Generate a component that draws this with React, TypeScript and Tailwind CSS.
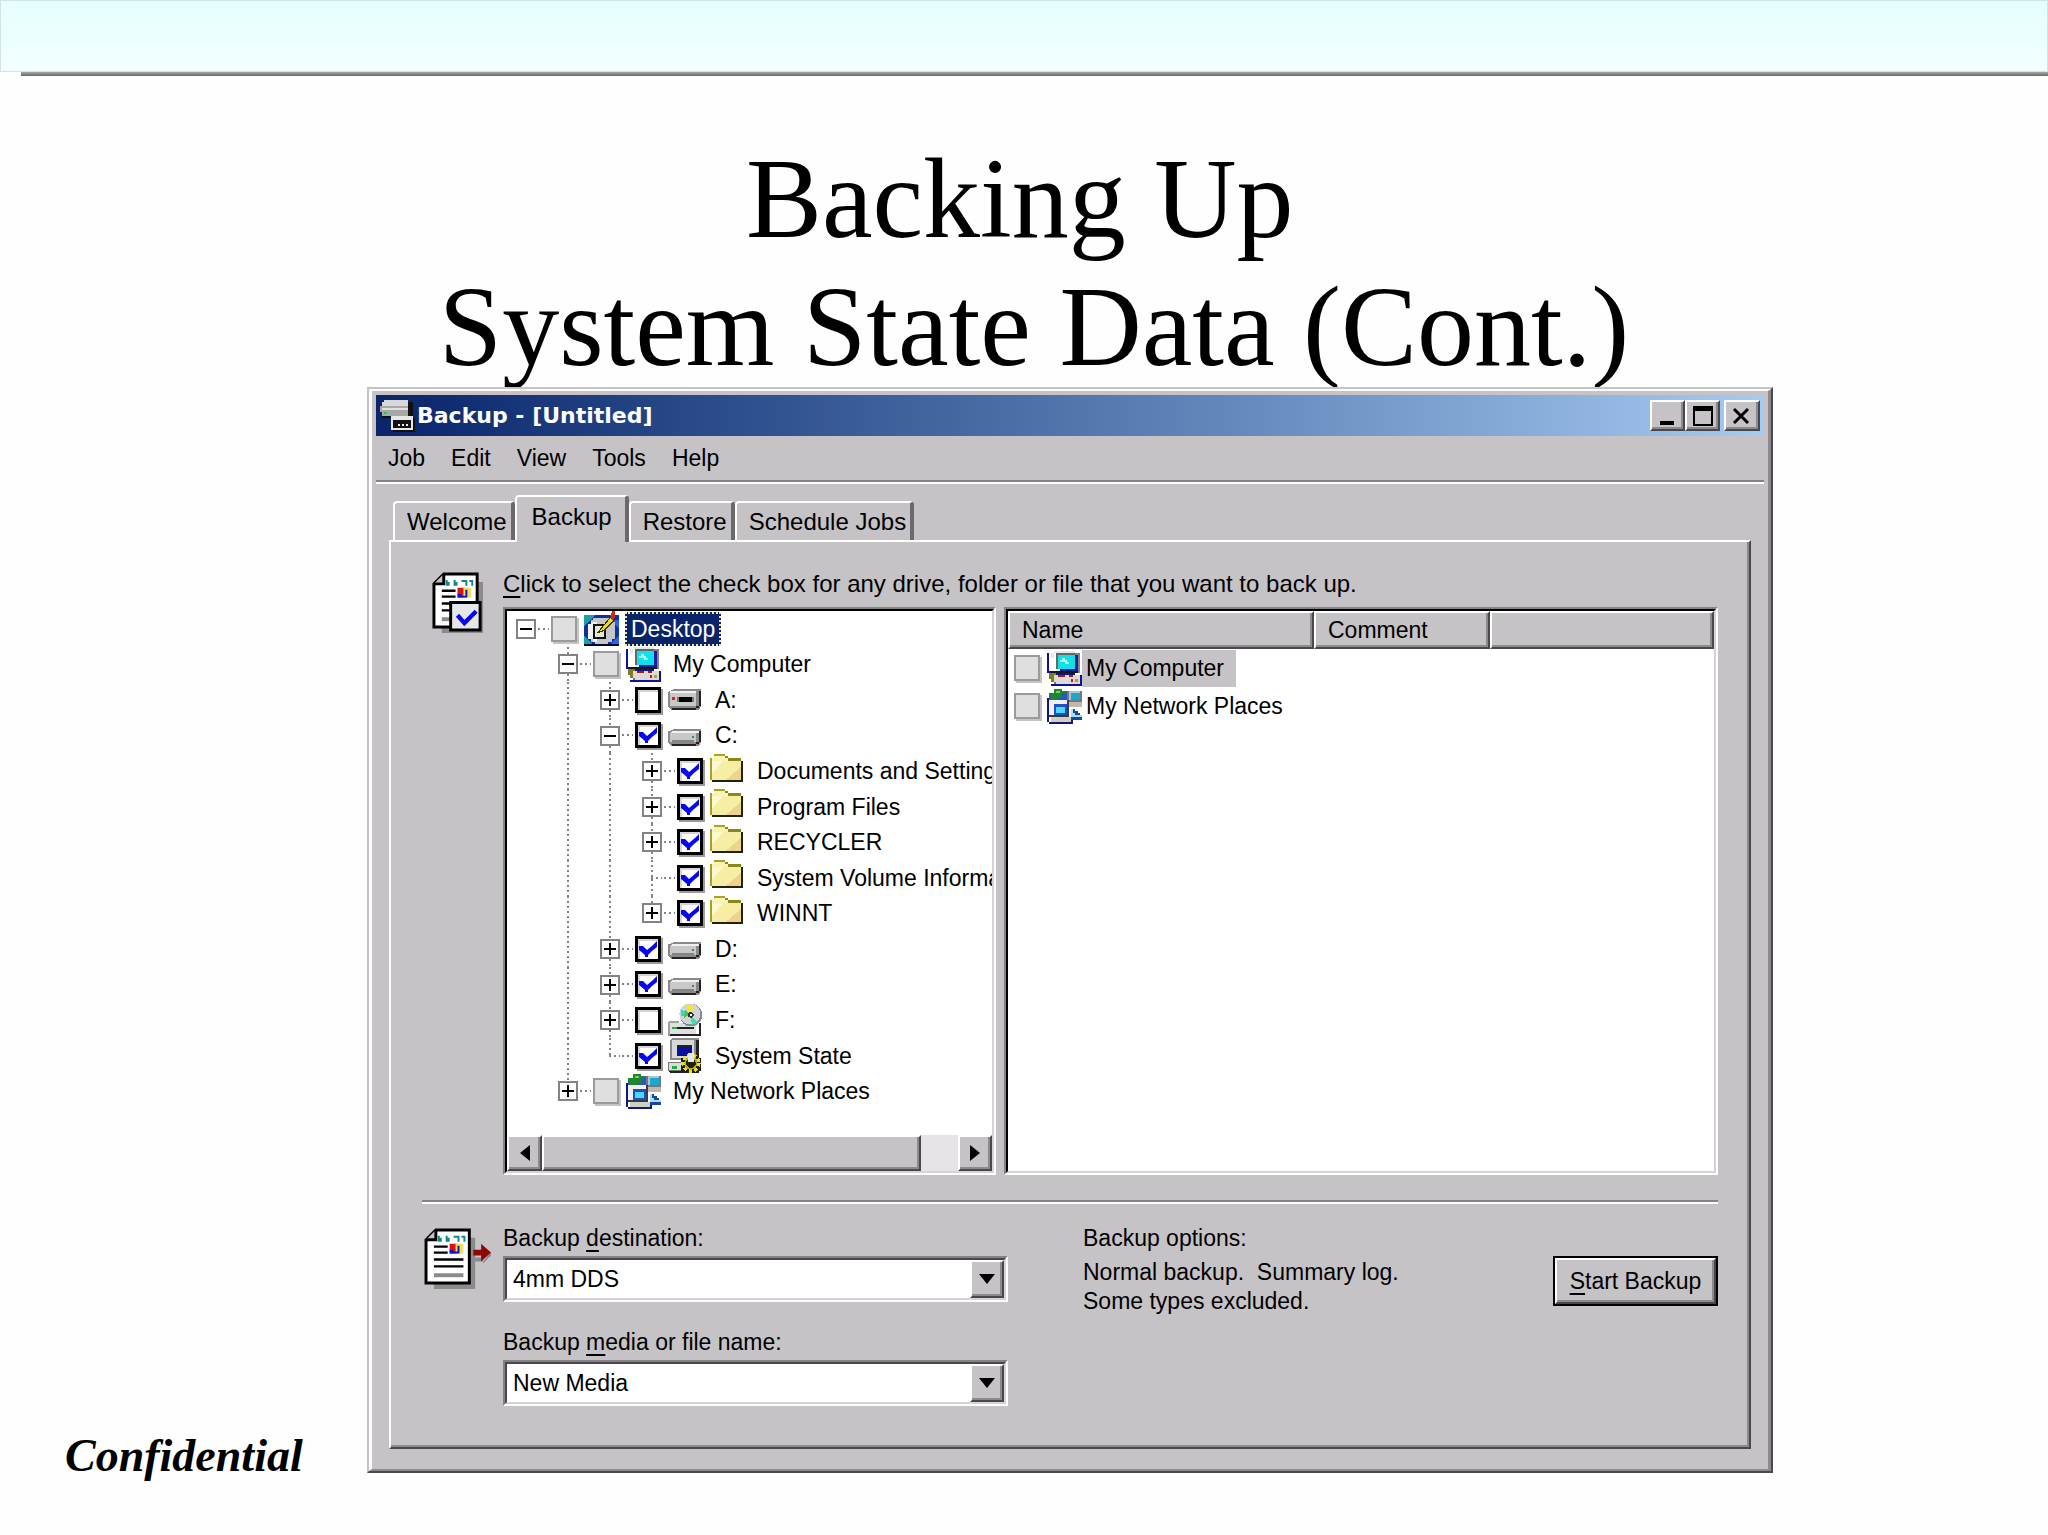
import { useState } from "react"
import type { ReactNode } from "react"

type IconName = 'desktop' | 'computer' | 'floppy' | 'drive' | 'folder' | 'cdrom' | 'state' | 'network'

interface TreeNode {
    label: string
    icon: IconName
    level: number
    expander: '+' | '-' | null
    checked: boolean
    disabled?: boolean
    // levels whose vertical line passes through this row
    guides: number[]
    last?: boolean
}

const nodes: TreeNode[] = [
    { label: 'Desktop', icon: 'desktop', level: 0, expander: '-', checked: false, disabled: true, guides: [] },
    { label: 'My Computer', icon: 'computer', level: 1, expander: '-', checked: false, disabled: true, guides: [] },
    { label: 'A:', icon: 'floppy', level: 2, expander: '+', checked: false, guides: [1] },
    { label: 'C:', icon: 'drive', level: 2, expander: '-', checked: true, guides: [1] },
    { label: 'Documents and Settings', icon: 'folder', level: 3, expander: '+', checked: true, guides: [1, 2] },
    { label: 'Program Files', icon: 'folder', level: 3, expander: '+', checked: true, guides: [1, 2] },
    { label: 'RECYCLER', icon: 'folder', level: 3, expander: '+', checked: true, guides: [1, 2] },
    { label: 'System Volume Information', icon: 'folder', level: 3, expander: null, checked: true, guides: [1, 2] },
    { label: 'WINNT', icon: 'folder', level: 3, expander: '+', checked: true, guides: [1, 2], last: true },
    { label: 'D:', icon: 'drive', level: 2, expander: '+', checked: true, guides: [1] },
    { label: 'E:', icon: 'drive', level: 2, expander: '+', checked: true, guides: [1] },
    { label: 'F:', icon: 'cdrom', level: 2, expander: '+', checked: false, guides: [1] },
    { label: 'System State', icon: 'state', level: 2, expander: null, checked: true, guides: [1], last: true },
    { label: 'My Network Places', icon: 'network', level: 1, expander: '+', checked: false, disabled: true, guides: [], last: true },
]

const vDots = 'w-[2px] bg-[repeating-linear-gradient(#848284_0_2px,transparent_2px_5px)]'
const hDots = 'h-[2px] bg-[repeating-linear-gradient(90deg,#848284_0_2px,transparent_2px_5px)]'
const raised = 'border-2 border-t-white border-l-white border-r-[#4a484a] border-b-[#4a484a] bg-[#c6c3c6] shadow-[inset_-2px_-2px_0_#8c8a8c]'

// ─── Icons ───────────────────────────────────────
const iconShapes: Record<IconName, ReactNode> = {
    desktop: (
        <>
            <rect x="0" y="2" width="16" height="14" fill="#12309c" />
            <path d="M0 2h5L0 7zM0 16v-5l5 5z" fill="#1aa0a8" />
            <path d="M16 16v-5l-5 5zM16 4v4l-4-4z" fill="#2a62e8" />
            <path d="M4 3h8v1h1v1h1v8h-1v1h-2v1H5v-1H3v-1H2V6h1V4h1z" fill="#c4c6c8" />
            <path d="M3 5h3v9H4v-1H2V6h1z" fill="#f2f2f2" />
            <path d="M4 6h6v7H4z" fill="#111" />
            <path d="M5 7h4v5H5z" fill="#e8e8d8" />
            <path d="M7 9l5-6 2 1-5 5-3 1z" fill="#e8d820" stroke="#3a3000" strokeWidth="0.5" />
            <path d="M12 2l1-2h1v3l-1 1z" fill="#d02818" />
            <rect x="0" y="15" width="16" height="1" fill="#000830" />
        </>
    ),
    computer: (
        <>
            <path d="M0 1h1v8h1v1h11v1H1v-1H0z" fill="#10109c" />
            <path d="M3 0h10v1h1v9H3v-1H2V1h1z" fill="#e8e8e8" />
            <path d="M13 1h2v9h-2z" fill="#848284" />
            <path d="M3 1h1v8H2V3h1z" fill="#fff" />
            <path d="M4 1h9v7H4z" fill="#60686c" />
            <path d="M5 2h8v6H5z" fill="#10e0e8" />
            <path d="M6 4h1V3h1v1h1v1h1v1H8V5H6z" fill="#a8fbff" />
            <path d="M13 2v6H6v1h8V2z" fill="#1020a0" />
            <path d="M2 9h12v1H2z" fill="#181818" />
            <path d="M1 10h3v5H3v-1H2v-1H1z" fill="#7c7c20" />
            <path d="M3 11h12v4H4v-1H3z" fill="#dcdcd4" />
            <path d="M5 11h3v1H5zM10 11h2v1h-2z" fill="#a01818" />
            <path d="M11 13h1v1h-1z" fill="#c02020" />
            <path d="M13 13h1v1h-1z" fill="#c0a020" />
            <path d="M2 15h13v-4h1v5H2z" fill="#10109c" />
        </>
    ),
    floppy: (
        <>
            <path d="M1 4l2-1h12v8l-1 2H2l-2-2V5z" fill="#8a888a" />
            <path d="M1 4h12v7H1z" fill="#c8c8c8" />
            <path d="M1 4h12v1H1z" fill="#f0f0f0" />
            <path d="M14 4h1v7h-1v1h-1v1H2v-1h11v-1h1z" fill="#222" />
            <rect x="4" y="7" width="8" height="2" fill="#777" />
            <rect x="5" y="7" width="6" height="2" fill="#000" />
            <rect x="2" y="7" width="1" height="1" fill="#e02020" />
        </>
    ),
    drive: (
        <>
            <path d="M1 6l2-1h12v6l-1 2H2l-2-2V6z" fill="#8a888a" />
            <path d="M1 7h12v4H1z" fill="#c8c8c8" />
            <path d="M2 6h12v1H1z" fill="#f0f0f0" />
            <path d="M14 6h1v5h-1v1h-1v1H2v-1h11v-1h1z" fill="#222" />
            <rect x="2" y="10" width="10" height="1" fill="#848284" />
            <rect x="11" y="8" width="1" height="1" fill="#20a030" />
        </>
    ),
    folder: (
        <>
            <path d="M1 12h13V3h1v10H1z" fill="#222210" />
            <path d="M0 2h2V0h5v1h1v1h6v10H0z" fill="#a8a420" />
            <path d="M2 1h5v1h1v1H1V2h1z" fill="#f8f4b8" />
            <path d="M1 3h13v9H1z" fill="#f6eea4" />
            <path d="M1 3h5L1 9z" fill="#fcf8d0" />
            <path d="M14 6v6H7z" fill="#ecd48c" />
            <path d="M7 1h1v1H7zM8 2h6v1H8z" fill="#8c8818" />
        </>
    ),
    cdrom: (
        <>
            <path d="M1 8h4v7H0V9z" fill="#a0a0a0" />
            <path d="M1 9h12v5H1z" fill="#e0e0e0" />
            <path d="M1 14h13V9h1v6H1z" fill="#222" />
            <circle cx="10.5" cy="5.5" r="5.2" fill="#8a8a8a" />
            <circle cx="10" cy="5" r="4.8" fill="#d0d4d4" />
            <path d="M10 5L8 1h4z" fill="#f0e830" />
            <path d="M10 5L6 3v3z" fill="#30d8d8" />
            <path d="M10 5l4 4-3 1z" fill="#40e0b0" />
            <path d="M8 3l2 2-3 2z" fill="#40c840" />
            <circle cx="10.5" cy="5.5" r="1.3" fill="#333" />
            <circle cx="10.5" cy="5.5" r="0.6" fill="#fff" />
            <rect x="4" y="11" width="8" height="1" fill="#222" />
            <rect x="2" y="11" width="2" height="1" fill="#20b040" />
        </>
    ),
    state: (
        <>
            <path d="M2 0h12v9l-1 1H1V1z" fill="#8a8a8a" />
            <path d="M2 1h10v8H2z" fill="#d8d8d8" />
            <path d="M13 1h1v9h-1z" fill="#222" />
            <rect x="4" y="3" width="7" height="5" fill="#0810a0" />
            <rect x="4" y="3" width="7" height="1" fill="#222" />
            <path d="M0 11h6v4H0z" fill="#dcdcdc" stroke="#777" strokeWidth="0.5" />
            <path d="M0 15h14v1H1z" fill="#222" />
            <rect x="2" y="13" width="2" height="1" fill="#20b040" />
            <path d="M6 9h9v6H6z" fill="#222010" />
            <circle cx="10.5" cy="11.5" r="3.4" fill="none" stroke="#e8e020" strokeWidth="2" strokeDasharray="1.4 1" />
            <circle cx="10.5" cy="11.5" r="2.6" fill="none" stroke="#b8ac10" strokeWidth="0.8" />
            <path d="M9 7h3v4H9z" fill="#e8e8e8" />
        </>
    ),
    network: (
        <>
            <path d="M1 2h8v4H1z" fill="#2858c8" />
            <path d="M3 0h4v1h2v1H7v2H5v1H2V3H1V2h2z" fill="#208828" />
            <path d="M4 1h2v1H4z" fill="#70d060" />
            <path d="M9 1h7v6H9z" fill="#707880" />
            <path d="M10 1h5v4h-5z" fill="#b8c0c8" />
            <path d="M11 2h4v3h-4z" fill="#18a8d0" />
            <path d="M9 6h7v2H9z" fill="#c0b8a8" />
            <path d="M0 4h1v11h1v1H1v-1H0z" fill="#10187c" />
            <path d="M1 5h9v8H1z" fill="#f0f0f0" />
            <path d="M9 5h1v9H9z" fill="#383858" />
            <path d="M3 7h6v5H3z" fill="#2050c0" />
            <path d="M4 8h4v3H4z" fill="#48d8f8" />
            <path d="M1 12h9v1H1z" fill="#383848" />
            <path d="M2 13h9v2H2z" fill="#d0d0c0" />
            <path d="M2 15h9v-2h1v3H2z" fill="#10187c" />
            <path d="M11 9h2v1h1v2h2v1h-5z" fill="#a8e0f4" />
            <path d="M12 9h1v1h1v1h1v1h-2v-1h-1zM11 13h5v1h-5z" fill="#18489c" />
        </>
    ),
}

const Icon = ({ name }: { name: IconName }) => (
    <svg viewBox="0 0 16 16" className="w-[35px] h-[35px] shrink-0" shapeRendering="crispEdges" aria-hidden="true">
        {iconShapes[name]}
    </svg>
)

const Sheet = () => (
    <>
        <path d="M5 5h21v28H5z" fill="#8c8a8c" />
        <path d="M6 1h17v27H1V6z" fill="#fff" stroke="#000" strokeWidth="1.5" />
        <path d="M6 1v5H1" fill="#c6c3c6" stroke="#000" strokeWidth="1.5" />
        <path d="M7 4h1v1h1v2H7zM11 4h1v1h1v2h-2zM15 4h3v3h-1V5h-2zM19 4h2v3h-1V5h-1z" fill="#108888" />
        <path d="M5 9.500h7M5 12.500h7M5 16h15M5 19.500h15" stroke="#000" strokeWidth="1.200" />
        <path d="M5 24h15" stroke="#8c8a8c" strokeWidth="2" />
        <path d="M13 8h4v5h-4z" fill="#e01010" />
        <path d="M16 8h4v5h-4z" fill="#f0e060" />
        <path d="M13 11h2v1h2v-3h1v4h-5z" fill="#1010d0" />
    </>
)

const SelectIcon = () => (
    <svg viewBox="0 0 27 31" className="w-[53px] h-[61px]" aria-hidden="true">
        <Sheet />
        <path d="M9.500 15.500h15v14h-15z" fill="#e7e7e7" stroke="#000" strokeWidth="1.500" />
        <path d="M13 22l3.500 4 6-6" fill="none" stroke="#0808f0" strokeWidth="2.200" />
    </svg>
)

const DestinationIcon = () => (
    <svg viewBox="0 0 35 31" className="w-[69px] h-[61px]" aria-hidden="true">
        <Sheet />
        <path d="M26 15h4v3l4-4v-2l-4 5h-4z" fill="#8c8a8c" />
        <path d="M25 11h4V8l5 4.500-5 4.500v-3h-4z" fill="#8c0808" />
    </svg>
)

const AppIcon = () => (
    <svg viewBox="0 0 16 16" className="w-[35px] h-[32px]" preserveAspectRatio="none" shapeRendering="crispEdges" aria-hidden="true">
        <path d="M2 0h11v1h2v7h-1v1H1V2h1z" fill="#111" />
        <path d="M2 0h11v3H1V1h1z" fill="#d8d8d8" />
        <path d="M0 3h13v5H1V6H0z" fill="#a8a8a8" />
        <path d="M1 4h12v1H1z" fill="#e0e0e0" />
        <rect x="2" y="6" width="1" height="1" fill="#20d040" />
        <path d="M6 9h10v7H6z" fill="#111" />
        <path d="M5 8h10v7H5z" fill="#e8e8e8" />
        <path d="M6 10h8v4H6z" fill="#111" />
        <path d="M8 12h1v1H8zM10 12h1v1h-1zM12 12h1v1h-1z" fill="#eee" />
    </svg>
)

// ─── Controls ────────────────────────────────────
interface CheckProps {
    label: string
    checked: boolean
    disabled?: boolean
    onChange?: () => void
}

const Check = ({ label, checked, disabled, onChange }: CheckProps) => (
    <span className="grid shrink-0 w-[27px]">
        <input
            type="checkbox"
            aria-label={label}
            checked={checked}
            disabled={disabled}
            onChange={onChange}
            className="[grid-area:1/1] appearance-none w-[26px] h-[26px] border-[3px] border-black bg-white shadow-[inset_1px_1px_0_1px_#d6d3d6,2px_2px_0_#9c9a9c]
                disabled:border-2 disabled:border-[#9c9a9c] disabled:bg-[#e0dfe0] disabled:shadow-[2px_2px_0_#c6c3c6]"
        />
        {checked && (
            <svg viewBox="0 0 26 26" className="[grid-area:1/1] w-[26px] h-[26px] pointer-events-none" aria-hidden="true">
                <path d="M4 10h4l4 4 6-5 4-4v6l-5 4-4 4v2h-3v-2l-6-5z" fill="#0808f0" />
            </svg>
        )}
    </span>
)

interface TreeRowProps {
    node: TreeNode
    checked: boolean
    onToggle: () => void
}

const TreeRow = ({ node, checked, onToggle }: TreeRowProps) => (
    <li className="flex items-center min-h-0">
        {Array.from({ length: node.level }, (_, k) => (
            <span key={k} className="w-[42px] shrink-0 self-stretch flex pl-[9px]">
                {node.guides.includes(k) && <span className={vDots} />}
            </span>
        ))}
        <span className="w-5 shrink-0 self-stretch flex flex-col items-center">
            <span className={`flex-1 ${node.level > 0 ? vDots : ''}`} />
            {node.expander ? (
                <button
                    type="button"
                    aria-label={`${node.expander === '+' ? 'Expand' : 'Collapse'} ${node.label}`}
                    className="w-5 h-5 border-2 border-[#848284] bg-white flex items-center justify-center"
                >
                    <svg viewBox="0 0 12 12" className="w-3 h-3" aria-hidden="true">
                        <path d={node.expander === '+' ? 'M0 5h12v2H0zM5 0h2v12H5z' : 'M0 5h12v2H0z'} fill="#000" />
                    </svg>
                </button>
            ) : (
                <span className={`w-[11px] self-end ${hDots}`} />
            )}
            <span className={`flex-1 ${node.level > 0 && !node.last ? vDots : ''}`} />
        </span>
        <span className="w-[15px] shrink-0 px-[2px]">
            <span className={`block ${hDots}`} />
        </span>
        <Check label={node.label} checked={checked} disabled={node.disabled} onChange={onToggle} />
        <span className="flex items-center gap-[6px] pl-[6px]">
            <Icon name={node.icon} />
            {node.level === 0 ? (
                <span className="px-1 h-[34px] leading-[30px] whitespace-nowrap bg-[#0a246a] text-white border-2 border-dotted border-[#f0e8a0]">
                    {node.label}
                </span>
            ) : (
                <span className="px-[6px] leading-8 whitespace-nowrap">{node.label}</span>
            )}
        </span>
    </li>
)

interface DropDownProps {
    id: string
    label: ReactNode
    value: string
}

const DropDown = ({ id, label, value }: DropDownProps) => (
    <div>
        <label htmlFor={id} className="block leading-8">{label}</label>
        <div className="relative mt-[2px] border-2 border-t-[#848284] border-l-[#848284] border-r-white border-b-white">
            <select
                id={id}
                defaultValue={value}
                className="block w-full h-[42px] pl-[6px] appearance-none bg-white border-2 border-t-[#4a484a] border-l-[#4a484a] border-r-[#d6d3d6] border-b-[#d6d3d6]"
            >
                <option>{value}</option>
            </select>
            <span className={`absolute right-[2px] top-[2px] bottom-[2px] w-[34px] flex items-center justify-center pointer-events-none ${raised}`}>
                <svg viewBox="0 0 16 10" className="w-4 h-[10px]" aria-hidden="true">
                    <path d="M0 0h16L8 10z" fill="#000" />
                </svg>
            </span>
        </div>
    </div>
)

const Key = ({ children }: { children: string }) => (
    <span className="underline decoration-2 underline-offset-4">{children}</span>
)

const tabs = ['Welcome', 'Backup', 'Restore', 'Schedule Jobs']

const tabClass = (tab: string) =>
    tab === 'Backup'
        ? 'relative h-[47px] -mb-[2px] pl-[15px] pr-[13px] pb-[6px]'
        : 'h-[39px] pl-3 pr-1'

const columns = [
    { name: 'Name', width: 'w-[306px]' },
    { name: 'Comment', width: 'w-[176px]' },
    { name: '', width: '' },
]

export default function App() {
    const [checks, setChecks] = useState(nodes.map(node => node.checked))

    const toggle = (index: number) =>
        setChecks(prev => prev.map((value, i) => i === index ? !value : value))

    return (
        <div className="min-h-screen bg-[#fefefe] text-black">
            <header>
                <div className="h-[72px] border border-[#d4e4e4] bg-linear-to-b from-[#e5fffe] to-[#f2ffff]" />
                <div className="ml-[21px] h-1 bg-linear-to-b from-[#a8a8a8] to-[#6c6a6c]" />
            </header>

            <h1 className="pt-[59px] pl-[20px] text-center whitespace-pre text-[114px] leading-[128px] font-['Liberation_Serif',serif]">
                {'Backing Up \nSystem State Data (Cont.)'}
            </h1>

            <main className="flex pr-[275px] -mt-1">
                <p className="w-[367px] shrink-0 self-end pl-[65px] text-[46px] leading-[34px] font-bold italic font-['Liberation_Serif',serif]">
                    Confidential
                </p>

                <section className="relative flex-1 min-w-0 border-2 border-t-[#c6c3c6] border-l-[#c6c3c6] border-r-[#4a484a] border-b-[#4a484a] text-[23px] font-['Liberation_Sans',Arial,sans-serif]">
                    <div className="border-2 border-x-[3px] border-t-white border-l-white border-r-[#8c8a8c] border-b-[#8c8a8c] bg-[#c6c3c6] px-1 pt-1 pb-[20px]">
                        <div className="h-[41px] flex items-center px-1 bg-linear-to-r from-[#0a246a] to-[#a6caf0]">
                            <AppIcon />
                            <h2 className="flex-1 pl-[2px] text-[22px] leading-8 font-bold text-white font-['DejaVu_Sans',sans-serif]">Backup - [Untitled]</h2>
                            <button type="button" aria-label="Minimize" className={`w-[35px] h-[31px] flex items-center justify-center ${raised}`}>
                                <svg viewBox="0 0 20 20" className="w-5 h-5" aria-hidden="true"><path d="M2 15h14v4H2z" /></svg>
                            </button>
                            <button type="button" aria-label="Maximize" className={`w-[35px] h-[31px] flex items-center justify-center ${raised}`}>
                                <svg viewBox="0 0 20 20" className="w-5 h-5" aria-hidden="true"><path d="M0 0h20v20H0zM2 5v13h16V5z" fillRule="evenodd" /></svg>
                            </button>
                            <button type="button" aria-label="Close" className={`ml-1 w-[36px] h-[31px] flex items-center justify-center ${raised}`}>
                                <svg viewBox="0 0 20 18" className="w-5 h-[18px]" aria-hidden="true"><path d="M2 2l14 14M16 2L2 16" stroke="#000" strokeWidth="3" /></svg>
                            </button>
                        </div>

                        <nav className="h-[44px] flex items-center gap-[26px] px-3">
                            {['Job', 'Edit', 'View', 'Tools', 'Help'].map(item => (
                                <button key={item} type="button" className="leading-8">{item}</button>
                            ))}
                        </nav>
                        <div className="h-1 border-t-2 border-b-2 border-t-[#848284] border-b-white" />

                        <div className="px-[13px] pt-[11px]">
                            <div role="tablist" className="flex items-end pl-1 text-[24px]">
                                {tabs.map(tab => (
                                    <button
                                        key={tab}
                                        type="button"
                                        role="tab"
                                        aria-selected={tab === 'Backup'}
                                        className={`border-t-2 border-l-2 border-r-4 border-t-white border-l-white border-r-[#6b696b] bg-[#c6c3c6] rounded-t-[4px] leading-8 ${tabClass(tab)}`}
                                    >
                                        {tab}
                                    </button>
                                ))}
                            </div>

                            <div className="border-2 border-t-white border-l-white border-r-[#4a484a] border-b-[#4a484a] shadow-[inset_-2px_-2px_0_#8c8a8c] pr-[31px] pb-[41px]">
                                {/* What to back up */}
                                <div className="flex pt-[26px]">
                                    <div className="w-[112px] shrink-0 pl-[41px] pt-1">
                                        <SelectIcon />
                                    </div>
                                    <div className="flex-1 min-w-0">
                                        <p className="text-[24px] leading-8">
                                            <Key>C</Key>lick to select the check box for any drive, folder or file that you want to back up.
                                        </p>
                                        <div className="flex gap-2 mt-[7px]">
                                            <div className="w-[493px] h-[568px] shrink-0 border-2 border-t-[#848284] border-l-[#848284] border-r-white border-b-white">
                                                <div className="h-full flex flex-col overflow-hidden bg-white border-2 border-t-black border-l-black border-r-[#d6d3d6] border-b-[#d6d3d6]">
                                                    <ul className="grid auto-rows-fr h-[498px] pl-[9px]">
                                                        {nodes.map((node, i) => (
                                                            <TreeRow key={node.label} node={node} checked={checks[i]} onToggle={() => toggle(i)} />
                                                        ))}
                                                    </ul>
                                                    <div className="mt-auto h-[36px] flex bg-[#e7e3e7]">
                                                        <button type="button" aria-label="Scroll left" className={`w-[35px] flex items-center justify-center ${raised}`}>
                                                            <svg viewBox="0 0 10 16" className="w-[10px] h-4" aria-hidden="true"><path d="M10 0v16L0 8z" /></svg>
                                                        </button>
                                                        <div className={`w-[379px] ${raised}`} />
                                                        <button type="button" aria-label="Scroll right" className={`ml-auto w-[34px] flex items-center justify-center ${raised}`}>
                                                            <svg viewBox="0 0 10 16" className="w-[10px] h-4" aria-hidden="true"><path d="M0 0v16l10-8z" /></svg>
                                                        </button>
                                                    </div>
                                                </div>
                                            </div>

                                            <div className="flex-1 min-w-0 border-2 border-t-[#848284] border-l-[#848284] border-r-white border-b-white">
                                                <div className="h-full bg-white border-2 border-t-black border-l-black border-r-[#d6d3d6] border-b-[#d6d3d6]">
                                                    <table className="w-full table-fixed border-separate border-spacing-0">
                                                        <thead>
                                                            <tr>
                                                                {columns.map(column => (
                                                                    <th
                                                                        key={column.name}
                                                                        scope="col"
                                                                        className={`h-[38px] px-3 py-0 text-left font-normal leading-8 ${column.width} ${raised}`}
                                                                    >
                                                                        {column.name}
                                                                    </th>
                                                                ))}
                                                            </tr>
                                                        </thead>
                                                        <tbody>
                                                            <tr>
                                                                <td colSpan={3} className="p-0">
                                                                    <div className="flex items-center h-[38px] pl-[6px]">
                                                                        <Check label="My Computer" checked={false} disabled />
                                                                        <span className="flex items-center pl-[6px]">
                                                                            <Icon name="computer" />
                                                                            <span className="h-[37px] pl-1 pr-3 leading-9 bg-[#c6c3c6]">My Computer</span>
                                                                        </span>
                                                                    </div>
                                                                </td>
                                                            </tr>
                                                            <tr>
                                                                <td colSpan={3} className="p-0">
                                                                    <div className="flex items-center h-[38px] pl-[6px]">
                                                                        <Check label="My Network Places" checked={false} disabled />
                                                                        <span className="flex items-center pl-[6px]">
                                                                            <Icon name="network" />
                                                                            <span className="pl-1 pr-3 leading-9">My Network Places</span>
                                                                        </span>
                                                                    </div>
                                                                </td>
                                                            </tr>
                                                        </tbody>
                                                    </table>
                                                </div>
                                            </div>
                                        </div>
                                    </div>
                                </div>

                                <div className="ml-[31px] mt-[25px] h-1 border-t-2 border-b-2 border-t-[#848284] border-b-white" />

                                {/* Where to put it */}
                                <div className="flex pt-[18px]">
                                    <div className="w-[112px] shrink-0 pl-[33px] pt-[6px]">
                                        <DestinationIcon />
                                    </div>
                                    <div className="w-[505px] shrink-0 flex flex-col gap-6">
                                        <DropDown id="destination" label={<>Backup <Key>d</Key>estination:</>} value="4mm DDS" />
                                        <DropDown id="media" label={<>Backup <Key>m</Key>edia or file name:</>} value="New Media" />
                                    </div>
                                    <div className="flex-1 pl-[75px]">
                                        <p className="leading-8">Backup options:</p>
                                        <p className="pt-1 leading-[29px] whitespace-pre">{'Normal backup.  Summary log.\nSome types excluded.'}</p>
                                    </div>
                                    <button type="button" className="mt-[34px] w-[165px] h-[50px] border-2 border-black">
                                        <span className={`h-full flex items-center justify-center ${raised}`}>
                                            <span><Key>S</Key>tart Backup</span>
                                        </span>
                                    </button>
                                </div>
                            </div>
                        </div>
                    </div>
                </section>
            </main>
        </div>
    )
}
